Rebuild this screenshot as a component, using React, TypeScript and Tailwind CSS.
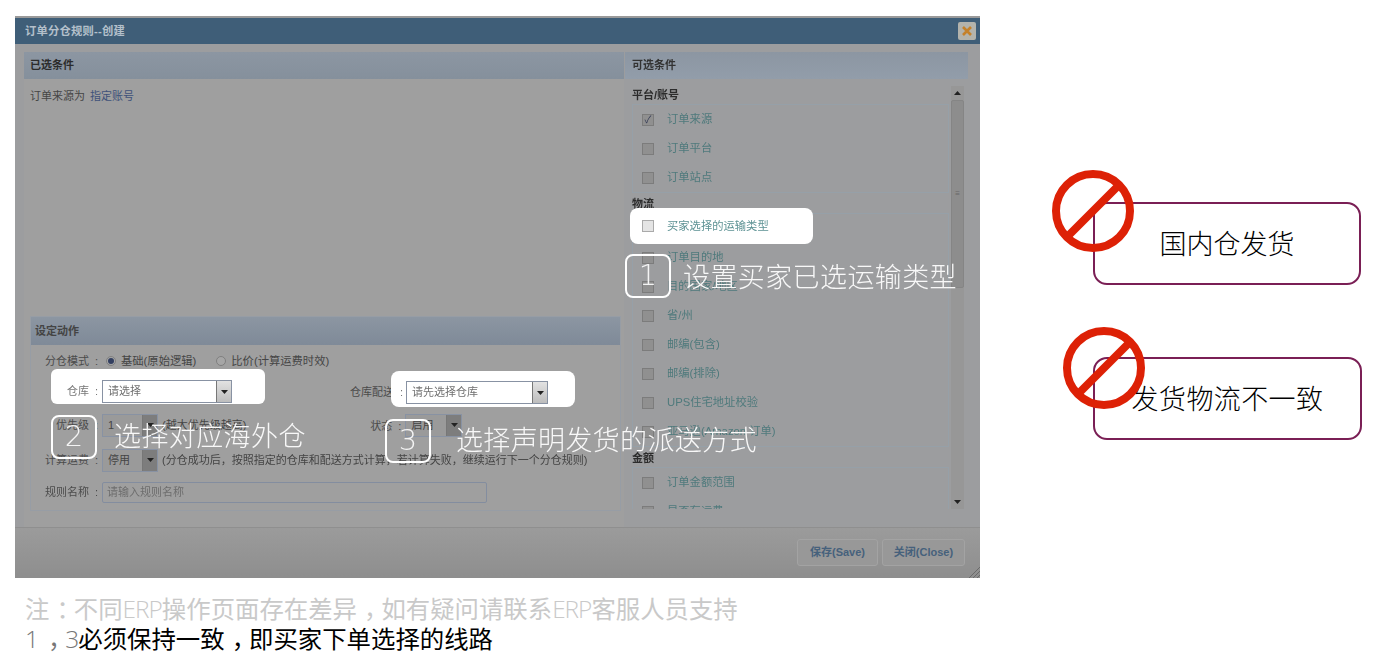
import type { ReactNode } from "react";

const CJK = "font-['Liberation_Sans','Noto_Sans_CJK_SC',sans-serif]";
const LATIN_LIGHT = "font-['Open_Sans',sans-serif] font-light";

function Check({ checked }: { checked?: boolean }) {
  return (
    <span className="flex h-[12px] w-[12px] shrink-0 items-center justify-center border border-[#7c7c7c] bg-[#909090] text-[10px] leading-none text-[#333a55]">
      {checked ? "✓" : ""}
    </span>
  );
}

function Row({ label, checked }: { label: string; checked?: boolean }) {
  return (
    <div className="flex h-[29px] items-center gap-[13px] pl-[9px] text-[11.3px] text-[#4f7a7c]">
      <Check checked={checked} />
      <span>{label}</span>
    </div>
  );
}

function Group({ title, children }: { title: string; children: ReactNode }) {
  return (
    <div>
      <div className="h-[18px] text-[11px] font-bold leading-[18px] text-[#2c2c2c]">{title}</div>
      <div className="border border-[#96a0a8]">{children}</div>
    </div>
  );
}

function Arrow({ up }: { up?: boolean }) {
  return (
    <svg width="7" height="4" viewBox="0 0 7 4" className={up ? "rotate-180" : ""}>
      <path d="M0 0h7L3.5 4z" fill="#222" />
    </svg>
  );
}

function Select({ text, width, light }: { text: string; width: string; light?: boolean }) {
  return (
    <div
      className={`flex h-[23px] items-center justify-between border border-[#8892a3] pl-[5px] text-[11px] ${width} ${
        light ? "bg-white text-[#6f6f6f]" : "bg-[#9a9a9a] text-[#444]"
      }`}
    >
      <span>{text}</span>
      <span
        className={`flex h-full w-[15px] items-center justify-center border-l border-[#777] ${
          light ? "bg-gradient-to-b from-[#e2e2e2] to-[#bdbdbd]" : "bg-[#7d7d7d]"
        }`}
      >
        <Arrow />
      </span>
    </div>
  );
}

function Label({ children, width }: { children: ReactNode; width: string }) {
  return (
    <span className={`shrink-0 text-right text-[11px] text-[#4b4b4b] ${width}`}>
      {children}
      <span className="ml-[6px]">:</span>
    </span>
  );
}

function Radio({ on }: { on?: boolean }) {
  return (
    <span className="flex h-[10px] w-[10px] items-center justify-center rounded-full border border-[#7f7f7f] bg-[#a6a6a6]">
      {on ? <span className="h-[6px] w-[6px] rounded-full bg-[#333f60]" /> : null}
    </span>
  );
}

function NumberBox({ n, className }: { n: string; className: string }) {
  return (
    <div
      className={`absolute flex h-[44px] w-[46px] items-center justify-center rounded-[8px] border-2 border-white font-['DejaVu_Sans',sans-serif] text-[29px] font-extralight text-[#f4f4f4] ${className}`}
    >
      {n}
    </div>
  );
}

function Caption({ text, className }: { text: string; className: string }) {
  return (
    <div className={`absolute whitespace-nowrap text-[27px] font-extralight leading-none text-[#f8f8f8] ${className}`}>
      {text}
    </div>
  );
}

function Prohibit({ className }: { className: string }) {
  return (
    <svg viewBox="0 0 84 84" width="84" height="84" className={`absolute ${className}`}>
      <circle cx="42" cy="42" r="37" fill="none" stroke="#dd2106" strokeWidth="8" />
      <path d="M15 69L69 15" stroke="#dd2106" strokeWidth="8" />
    </svg>
  );
}

function Dialog() {
  return (
    <div className={`relative h-[562px] w-[965px] overflow-hidden bg-[#9c9d9f] ${CJK}`}>
      <div className="flex h-full flex-col blur-[0.5px]">
        <div className="flex h-[28px] items-center justify-between border-t-2 border-[#9a9a9a] bg-[#3f5e78] pl-[10px] pr-[4px] text-[11.3px] font-bold tracking-[0.2px] text-[#b4c0cb]">
          <span>订单分仓规则--创建</span>
          <span className="flex h-[18px] w-[18px] items-center justify-center rounded-[2px] bg-[#b3b3ac]">
            <svg width="10" height="10" viewBox="0 0 10 10">
              <path d="M1 1L9 9M9 1L1 9" stroke="#c4812a" strokeWidth="2.6" />
            </svg>
          </span>
        </div>
        <div className="flex h-[484px] gap-[1px] border-b border-[#8f8f8f] pl-[9px] pr-[12px] pt-[8px]">
          {/* selected conditions + action */}
          <div className="flex w-[600px] flex-col bg-[#9f9f9f]">
            <div className="flex h-[27px] items-center bg-gradient-to-b from-[#8c96a2] to-[#85909c] pl-[6px] text-[11px] font-bold text-[#2c2c2c]">
              已选条件
            </div>
            <div className="h-[237px] pl-[6px] pt-[9px] text-[11px] text-[#454545]">
              订单来源为<span className="ml-[5px] text-[#40527a]">指定账号</span>
            </div>
            <div className="ml-[6px] w-[591px] border border-[#979da5]">
              <div className="flex h-[28px] items-center bg-gradient-to-b from-[#8c96a2] to-[#7f8a98] pl-[4px] text-[11px] font-bold text-[#444]">
                设定动作
              </div>
              <div className="flex h-[165px] flex-col pt-[4px]">
                <div className="flex h-[24px] items-center gap-[4px]">
                  <Label width="w-[67px]">分仓模式</Label>
                  <span className="ml-[4px] mr-[1px]"><Radio on /></span>
                  <span className="text-[11.3px] text-[#454545]">基础(原始逻辑)</span>
                  <span className="ml-[16px] mr-[1px]"><Radio /></span>
                  <span className="text-[11.3px] text-[#454545]">比价(计算运费时效)</span>
                </div>
                <div className="mt-[7px] flex h-[24px] items-center gap-[4px]">
                  <div className="w-[67px]" />
                  <div className="w-[244px]" />
                  <span className="text-[11px] text-[#4b4b4b]">仓库配送</span>
                </div>
                <div className="mt-[9px] flex h-[24px] items-center gap-[4px]">
                  <Label width="w-[67px]">优先级</Label>
                  <Select text="1" width="w-[56px]" />
                  <span className="text-[11px] text-[#444]">(越大优先级越高)</span>
                  <span className="ml-[120px]"><Label width="w-[36px]">状态</Label></span>
                  <Select text="启用" width="w-[57px]" />
                </div>
                <div className="mt-[11px] flex h-[24px] items-center gap-[4px]">
                  <Label width="w-[67px]">计算运费</Label>
                  <Select text="停用" width="w-[56px]" />
                  <span className="text-[11px] text-[#444]">
                    (分仓成功后，按照指定的仓库和配送方式计算，若计算失败，继续运行下一个分仓规则)
                  </span>
                </div>
                <div className="mt-[9px] flex h-[22px] items-center gap-[4px]">
                  <Label width="w-[67px]">规则名称</Label>
                  <div className="flex h-[21px] w-[385px] items-center rounded-[2px] border border-[#838d9f] pl-[4px] text-[11px] text-[#6d6d6d]">
                    请输入规则名称
                  </div>
                </div>
              </div>
            </div>
          </div>
          {/* available conditions */}
          <div className="flex w-[343px] flex-col">
            <div className="flex h-[27px] items-center bg-gradient-to-b from-[#8c96a2] to-[#929daa] pl-[7px] text-[11px] font-bold text-[#333]">
              可选条件
            </div>
            <div className="mt-[7px] flex h-[423px] overflow-hidden pl-[7px]">
              <div className="h-full w-[317px] overflow-hidden">
                <Group title="平台/账号">
                  <Row label="订单来源" checked />
                  <Row label="订单平台" />
                  <Row label="订单站点" />
                </Group>
                <div className="h-[2px]" />
                <Group title="物流">
                  <Row label="买家选择的运输类型" />
                  <Row label="订单目的地" />
                  <Row label="目的国家/地区" />
                  <Row label="省/州" />
                  <Row label="邮编(包含)" />
                  <Row label="邮编(排除)" />
                  <Row label="UPS住宅地址校验" />
                  <Row label="亚马逊(Amazon 订单)" />
                </Group>
                <div className="h-[2px]" />
                <Group title="金额">
                  <Row label="订单金额范围" />
                  <Row label="是否有运费" />
                </Group>
              </div>
              <div className="ml-[2px] flex w-[13px] flex-col items-center bg-[#979797]">
                <div className="flex h-[14px] items-center"><Arrow up /></div>
                <div className="flex h-[188px] w-full items-center justify-center rounded-[2px] border border-[#858585] bg-[#8d8d8d] text-[8px] text-[#666]">
                  ≡
                </div>
                <div className="flex-1" />
                <div className="flex h-[14px] items-center"><Arrow /></div>
              </div>
            </div>
          </div>
        </div>
        {/* footer */}
        <div className="flex flex-1 items-center justify-end gap-[4px] bg-gradient-to-b from-[#9b9b9b] to-[#8e8e8e] pb-[2px] pr-[15px]">
          <span className="flex h-[27px] w-[81px] items-center justify-center rounded-[3px] border border-[#a3a3a3] bg-[#989898] text-[11px] font-bold text-[#46617c]">
            保存(Save)
          </span>
          <span className="flex h-[27px] w-[83px] items-center justify-center rounded-[3px] border border-[#a3a3a3] bg-[#989898] text-[11px] font-bold text-[#46617c]">
            关闭(Close)
          </span>
        </div>
      </div>
      <svg width="12" height="12" viewBox="0 0 12 12" className="absolute bottom-0 right-0">
        <path d="M1 12L12 1M5 12L12 5M9 12L12 9" stroke="#6a6a6a" strokeWidth="1" />
      </svg>

      {/* highlighted areas */}
      <div className="absolute left-[615px] top-[192px] flex h-[36px] w-[183px] items-center gap-[13px] rounded-[8px] bg-white pl-[12px] text-[11.3px] text-[#5d9294] blur-[0.4px]">
        <span className="h-[12px] w-[12px] border border-[#aaa] bg-[#e4e4e4]" />
        买家选择的运输类型
      </div>
      <div className="absolute left-[36px] top-[353px] flex h-[35px] w-[214px] items-end gap-[4px] rounded-[6px] bg-white pb-[1px] blur-[0.4px]">
        <span className="h-[23px] w-[47px] text-right text-[11px] leading-[23px] text-[#777]">
          仓库<span className="ml-[6px]">:</span>
        </span>
        <Select text="请选择" width="w-[130px]" light />
      </div>
      <div className="absolute left-[376px] top-[355px] flex h-[36px] w-[184px] items-end gap-[3px] rounded-[8px] bg-white pb-[3px] pl-[9px] blur-[0.4px]">
        <span className="h-[23px] text-[11px] leading-[23px] text-[#777]">:</span>
        <Select text="请先选择仓库" width="w-[142px]" light />
      </div>

      <NumberBox n="1" className="left-[610px] top-[238px]" />
      <Caption text="设置买家已选运输类型" className="left-[668px] top-[249px] tracking-[0.4px]" />
      <NumberBox n="2" className="left-[36px] top-[399px]" />
      <Caption text="选择对应海外仓" className="left-[99px] top-[408px] tracking-[0.4px]" />
      <NumberBox n="3" className="left-[370px] top-[403px]" />
      <Caption text="选择声明发货的派送方式" className="left-[441px] top-[412px] tracking-[0.35px]" />
    </div>
  );
}

function Card({ text, className, sign }: { text: string; className: string; sign: string }) {
  return (
    <div
      className={`relative flex h-[83px] items-center justify-center rounded-[14px] border-2 border-[#7a1f55] pt-[4px] text-[27px] font-extralight text-black ${className}`}
    >
      <span className="whitespace-nowrap">{text}</span>
      <Prohibit className={sign} />
    </div>
  );
}

function Ml({ children }: { children: string }) {
  return <span className={`tracking-[-1px] ${LATIN_LIGHT}`}>{children}</span>;
}

function Punct({ children }: { children: string }) {
  return <span className="ml-[7px] mr-[-7px]">{children}</span>;
}

export default function App() {
  return (
    <div className={`flex h-[666px] w-[1388px] overflow-hidden bg-white pl-[15px] pt-[16px] ${CJK}`}>
      <div className="w-[965px] shrink-0">
        <Dialog />
        <div className="pl-[10px] pt-[16px] text-[24.4px] leading-[29px]">
          <div className="whitespace-nowrap text-[#c9c9c9]">
            注<Punct>：</Punct>不同<Ml>ERP</Ml>操作页面存在差异<Punct>，</Punct>如有疑问请联系<Ml>ERP</Ml>客服人员支持
          </div>
          <div className="whitespace-nowrap text-black">
            <span className="text-[#777]">
              <Ml>1</Ml>
              <span className="ml-[3px]"><Punct>，</Punct></span>
              <Ml>3</Ml>
            </span>
            必须保持一致<Punct>，</Punct>即买家下单选择的线路
          </div>
        </div>
      </div>
      <div className="ml-[113px] flex w-[269px] shrink-0 flex-col pt-[186px]">
        <Card text="国内仓发货" className="w-[268px]" sign="-left-[44px] -top-[35px]" />
        <Card text="发货物流不一致" className="mt-[72px] w-[269px] tracking-[0.4px]" sign="-left-[33px] -top-[33px]" />
      </div>
    </div>
  );
}
